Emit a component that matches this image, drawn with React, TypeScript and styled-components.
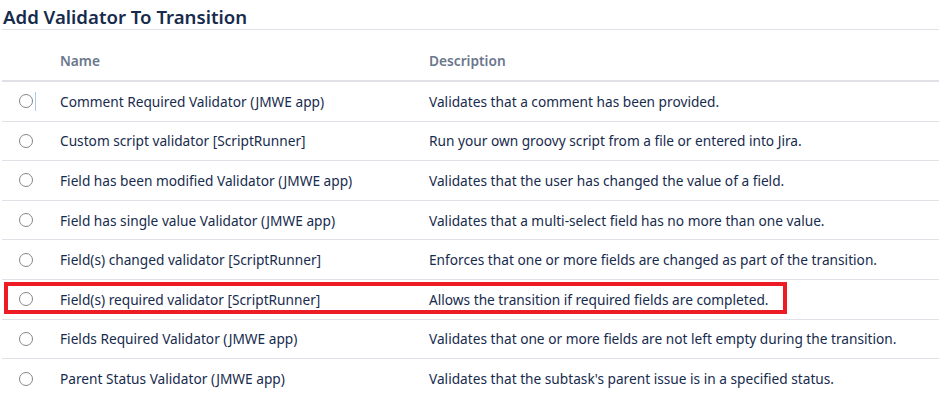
import React from "react";
import styled, { createGlobalStyle } from "styled-components";

const Global = createGlobalStyle`
  html, body { margin: 0; padding: 0; background: #fff; }
  body { font-family: "Noto Sans", "Open Sans", Arial, sans-serif; color: #172B4D; }
`;

const Page = styled.div`
  width: 939px;
  padding-left: 2px;
  box-sizing: border-box;
`;

const Title = styled.h2`
  margin: 0;
  padding: 4px 0 0 1px;
  height: 30px;
  box-sizing: border-box;
  font-size: 18.6px;
  font-weight: 600;
  line-height: 25px;
  color: #172B4D;
  border-bottom: 1px solid #DFE1E6;
`;

const Row = styled.div<{ $head?: boolean }>`
  position: relative;
  display: grid;
  grid-template-columns: 58px 369px 1fr;
  align-items: center;
  box-sizing: border-box;
  height: ${(p) => (p.$head ? "52px" : "39.6px")};
  padding-top: ${(p) => (p.$head ? "10px" : "0")};
  border-bottom: ${(p) => (p.$head ? "2px solid #DFE1E6" : "1px solid #DFE1E6")};
  font-size: 13.7px;
  color: ${(p) => (p.$head ? "#6B778C" : "#172B4D")};
  font-weight: ${(p) => (p.$head ? 600 : 400)};
  &:last-child { border-bottom: none; }
`;

const Cell = styled.div`
  white-space: nowrap;
`;

const RadioCell = styled.div`
  display: flex;
  align-items: center;
  padding-left: 17px;
  gap: 2px;
`;

const Radio = styled.span`
  display: inline-block;
  width: 14px;
  height: 14px;
  box-sizing: border-box;
  border: 1px solid #858585;
  border-radius: 50%;
  background: #fff;
`;

const Caret = styled.span`
  display: inline-block;
  width: 1px;
  height: 19px;
  background: #a9c8f0;
`;

const Highlight = styled.span`
  position: absolute;
  left: 2px;
  top: 2px;
  width: 783px;
  height: 32px;
  box-sizing: border-box;
  border: 4px solid #ED1C24;
  pointer-events: none;
`;

const rows: [string, string][] = [
  ["Comment Required Validator (JMWE app)", "Validates that a comment has been provided."],
  ["Custom script validator [ScriptRunner]", "Run your own groovy script from a file or entered into Jira."],
  ["Field has been modified Validator (JMWE app)", "Validates that the user has changed the value of a field."],
  ["Field has single value Validator (JMWE app)", "Validates that a multi-select field has no more than one value."],
  ["Field(s) changed validator [ScriptRunner]", "Enforces that one or more fields are changed as part of the transition."],
  ["Field(s) required validator [ScriptRunner]", "Allows the transition if required fields are completed."],
  ["Fields Required Validator (JMWE app)", "Validates that one or more fields are not left empty during the transition."],
  ["Parent Status Validator (JMWE app)", "Validates that the subtask's parent issue is in a specified status."],
];

export default function App() {
  return (
    <Page>
      <Global />
      <Title>Add Validator To Transition</Title>
      <Row $head>
        <Cell />
        <Cell>Name</Cell>
        <Cell>Description</Cell>
      </Row>
      {rows.map(([name, desc], i) => (
        <Row key={name}>
          <RadioCell>
            <Radio />
            {i === 0 && <Caret />}
          </RadioCell>
          <Cell>{name}</Cell>
          <Cell>{desc}</Cell>
          {i === 5 && <Highlight />}
        </Row>
      ))}
    </Page>
  );
}
